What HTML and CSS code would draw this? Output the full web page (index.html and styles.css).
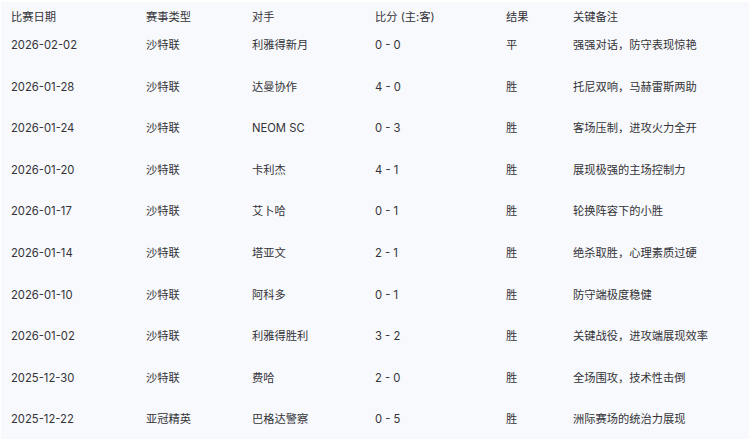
FILE: index.html
```html
<!DOCTYPE html>
<html lang="zh">
<head>
<meta charset="utf-8">
<link rel="stylesheet" href="styles.css">
</head>
<body>
<div class="table">
  <div class="row head"><div>比赛日期</div><div>赛事类型</div><div>对手</div><div>比分 (主:客)</div><div>结果</div><div>关键备注</div></div>
  <div class="row"><div>2026-02-02</div><div>沙特联</div><div>利雅得新月</div><div>0 - 0</div><div>平</div><div>强强对话，防守表现惊艳</div></div>
  <div class="row"><div>2026-01-28</div><div>沙特联</div><div>达曼协作</div><div>4 - 0</div><div>胜</div><div>托尼双响，马赫雷斯两助</div></div>
  <div class="row"><div>2026-01-24</div><div>沙特联</div><div>NEOM SC</div><div>0 - 3</div><div>胜</div><div>客场压制，进攻火力全开</div></div>
  <div class="row"><div>2026-01-20</div><div>沙特联</div><div>卡利杰</div><div>4 - 1</div><div>胜</div><div>展现极强的主场控制力</div></div>
  <div class="row"><div>2026-01-17</div><div>沙特联</div><div>艾卜哈</div><div>0 - 1</div><div>胜</div><div>轮换阵容下的小胜</div></div>
  <div class="row"><div>2026-01-14</div><div>沙特联</div><div>塔亚文</div><div>2 - 1</div><div>胜</div><div>绝杀取胜，心理素质过硬</div></div>
  <div class="row"><div>2026-01-10</div><div>沙特联</div><div>阿科多</div><div>0 - 1</div><div>胜</div><div>防守端极度稳健</div></div>
  <div class="row"><div>2026-01-02</div><div>沙特联</div><div>利雅得胜利</div><div>3 - 2</div><div>胜</div><div>关键战役，进攻端展现效率</div></div>
  <div class="row"><div>2025-12-30</div><div>沙特联</div><div>费哈</div><div>2 - 0</div><div>胜</div><div>全场围攻，技术性击倒</div></div>
  <div class="row"><div>2025-12-22</div><div>亚冠精英</div><div>巴格达警察</div><div>0 - 5</div><div>胜</div><div>洲际赛场的统治力展现</div></div>
</div>
</body>
</html>
```
FILE: styles.css
```css
html, body {
  margin: 0;
  padding: 0;
  background: #ffffff;
}
body {
  padding: 2px 2px 0 1px;
  font-family: Inter, "Noto Sans CJK SC", sans-serif;
  font-size: 11.25px;
  color: #333338;
}
.table {
  background: #f8f9fc;
  display: flex;
  flex-direction: column;
}
.row {
  display: grid;
  grid-template-columns: 135px 106px 123px 131px 67px 1fr;
  height: 41.6px;
  box-sizing: border-box;
  padding-top: 5px;
  line-height: 16px;
}
.row > div {
  padding-left: 10px;
  white-space: nowrap;
}
.row.head {
  height: 30px;
  padding-top: 7px;
}
```
